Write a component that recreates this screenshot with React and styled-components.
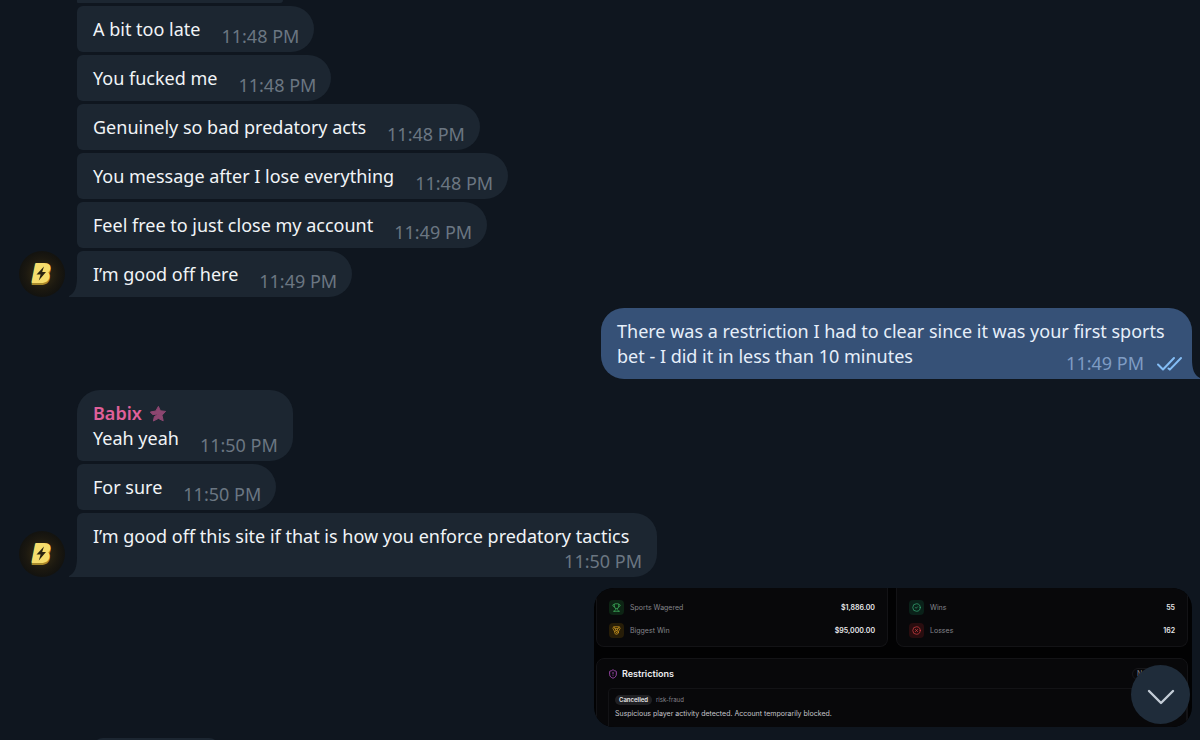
import React from "react";
import styled, { createGlobalStyle } from "styled-components";
import { Trophy, Medal, CircleCheck, CircleX, ShieldAlert } from "lucide-react";

const firstGroup = [
  { text: "A bit too late", time: "11:48 PM" },
  { text: "You fucked me", time: "11:48 PM" },
  { text: "Genuinely so bad predatory acts", time: "11:48 PM" },
  { text: "You message after I lose everything", time: "11:48 PM" },
  { text: "Feel free to just close my account", time: "11:49 PM" },
  { text: "I’m good off here", time: "11:49 PM", last: true },
];

const secondGroup = [
  { text: "Yeah yeah", time: "11:50 PM", author: "Babix" },
  { text: "For sure", time: "11:50 PM" },
  {
    text: "I’m good off this site if that is how you enforce predatory tactics",
    time: "11:50 PM",
    stacked: true,
    last: true,
  },
];

const Star = () => (
  <svg width="18" height="18" viewBox="0 0 18 18" aria-hidden="true">
    <path
      d="M9.4 1.4 L11.4 5.8 L16.6 6.4 L13 10.2 L14.2 15.8 L9.4 13.4 L4.4 16 L5.4 11.6 L9.4 9 L3.6 9.6 L1.4 7 L6.8 6 Z"
      fill="#8c4670"
      stroke="#8c4670"
      strokeWidth="1"
      strokeLinejoin="round"
    />
  </svg>
);

const Avatar = () => (
  <AvatarCircle>
    <svg width="46" height="46" viewBox="0 0 46 46" role="img" aria-label="Babix">
      <g strokeWidth="2" strokeLinejoin="round">
        <text x="13" y="33" fill="#a88a2c" stroke="#a88a2c">B</text>
        <text x="13" y="31" fill="#f6dd6c" stroke="#f6dd6c">B</text>
      </g>
      <path d="M18 17 H28 V29 H17 Z" fill="#f6dd6c" />
      <path d="M25 15.5 L17.5 23.4 H21.6 L19.8 29.5 L27 21 H23.2 Z" fill="#2b2411" />
    </svg>
  </AvatarCircle>
);

const Message = ({ text, time, author, stacked, last }) => (
  <Bubble $last={last} $author={author}>
    {author && (
      <Author>
        {author}
        <Star />
      </Author>
    )}
    {text}
    <Time $stacked={stacked}>{time}</Time>
    {last && (
      <Tail width="9" height="20" viewBox="0 0 9 20" aria-hidden="true">
        <path d="M9 0 H8 C8 10 6 16 0 19 V20 H9 Z" fill="#1c2631" />
      </Tail>
    )}
  </Bubble>
);

export default function App() {
  return (
    <>
      <GlobalStyle />
      <Chat>
        <CutBubble />
        <Group>
          <Avatar />
          <Messages>
            {firstGroup.map((message) => (
              <Message key={message.text} {...message} />
            ))}
          </Messages>
        </Group>

        <OwnBubble>
          There was a restriction I had to clear since it was your first sports bet - I did it in less
          than 10 minutes
          <Time $own>
            11:49 PM
            <svg width="25" height="16" viewBox="0 0 25 16" aria-label="Read">
              <path
                d="M1 8.5 L6 13.5 L17 2 M11.5 12.5 L12.8 13.6 L24 2"
                fill="none"
                stroke="#84bdf5"
                strokeWidth="2"
                strokeLinecap="round"
                strokeLinejoin="round"
              />
            </svg>
          </Time>
          <OwnTail width="9" height="20" viewBox="0 0 9 20" aria-hidden="true">
            <path d="M0 0 H1 C1 10 3 16 9 19 V20 H0 Z" fill="#365177" />
          </OwnTail>
        </OwnBubble>

        <Group>
          <Avatar />
          <Messages>
            {secondGroup.map((message) => (
              <Message key={message.text} {...message} />
            ))}
          </Messages>
        </Group>

        <Attachment>
          <Stats>
            <Card>
              <Stat>
                <StatIcon $color="#3fae5c" $tint="#0d2414"><Trophy size={9} /></StatIcon>
                Sports Wagered
                <Value>$1,886.00</Value>
              </Stat>
              <Stat>
                <StatIcon $color="#d09a20" $tint="#271d08"><Medal size={9} /></StatIcon>
                Biggest Win
                <Value>$95,000.00</Value>
              </Stat>
            </Card>
            <Card>
              <Stat>
                <StatIcon $color="#35a573" $tint="#0a2119"><CircleCheck size={9} /></StatIcon>
                Wins
                <Value>55</Value>
              </Stat>
              <Stat>
                <StatIcon $color="#cc3d40" $tint="#290d0f"><CircleX size={9} /></StatIcon>
                Losses
                <Value>162</Value>
              </Stat>
            </Card>
          </Stats>
          <Restrictions>
            <RestrictionsHead>
              <ShieldAlert size={10} color="#b552c4" />
              <h2>Restrictions</h2>
              <Pill>New</Pill>
            </RestrictionsHead>
            <Restriction>
              <Tags>
                <Cancelled>Cancelled</Cancelled>
                risk-fraud
              </Tags>
              <p>Suspicious player activity detected. Account temporarily blocked.</p>
            </Restriction>
          </Restrictions>
        </Attachment>

        <NextBubble />

        <ScrollDown type="button" aria-label="Scroll to bottom">
          <svg width="28" height="16" viewBox="0 0 28 16" aria-hidden="true">
            <path
              d="M2 2 L14 14 L26 2"
              fill="none"
              stroke="#c3ccd6"
              strokeWidth="2.4"
              strokeLinecap="round"
              strokeLinejoin="round"
            />
          </svg>
        </ScrollDown>
      </Chat>
    </>
  );
}

const GlobalStyle = createGlobalStyle`
  * {
    box-sizing: border-box;
  }
  body {
    margin: 0;
    background: #0f161f;
  }
  h2, p {
    margin: 0;
  }
`;

const Chat = styled.main`
  position: relative;
  display: flex;
  flex-direction: column;
  gap: 11px;
  height: 100vh;
  overflow: hidden;
  padding-right: 8px;
  color: #f1f4f7;
  font: 18px/25px "Noto Sans", sans-serif;
`;

const CutBubble = styled.div`
  flex: none;
  width: 206px;
  height: 3px;
  margin: 0 0 -8px 77px;
  background: #1c2631;
  border-radius: 0 0 20px 6px;
`;

const NextBubble = styled.div`
  flex: none;
  width: 126px;
  height: 20px;
  margin-left: 93px;
  background: #1c2631;
  border-radius: 10px;
`;

const Group = styled.section`
  display: flex;
  flex: none;
  align-items: flex-end;
  gap: 12px;
  padding-left: 19px;
`;

const AvatarCircle = styled.div`
  flex: none;
  width: 46px;
  height: 46px;
  border-radius: 50%;
  background: radial-gradient(circle, #3a3014 0%, #1b1810 50%, #12120f 72%);

  text {
    font: italic bold 25px "DejaVu Sans", sans-serif;
  }
`;

const Messages = styled.div`
  display: flex;
  flex-direction: column;
  align-items: flex-start;
  gap: 3px;
`;

const Bubble = styled.div`
  position: relative;
  display: flow-root;
  max-width: 580px;
  padding: 11px 15px 10px 16px;
  background: #1c2631;
  border-radius: ${(props) => (props.$author ? "23px 23px 23px 6px" : "6px 23px 23px 6px")};
  ${(props) => props.$last && "border-bottom-left-radius: 0;"}
`;

const OwnBubble = styled(Bubble)`
  flex: none;
  align-self: flex-end;
  max-width: 591px;
  padding-right: 10px;
  background: #365177;
  color: #e6effa;
  border-radius: 23px 23px 0 23px;
`;

const Tail = styled.svg`
  position: absolute;
  left: -8px;
  bottom: 0;
`;

const OwnTail = styled.svg`
  position: absolute;
  right: -8px;
  bottom: 0;
`;

const Author = styled.div`
  display: flex;
  align-items: center;
  gap: 7px;
  color: #e0609a;
  font-weight: 600;
`;

const Time = styled.span`
  float: right;
  display: flex;
  align-items: center;
  gap: 13px;
  margin: ${(props) => (props.$stacked ? "0" : "7px")} 0 -7px 21px;
  color: ${(props) => (props.$own ? "#7f9cc4" : "#6b7682")};
`;

const Attachment = styled.section`
  flex: none;
  align-self: flex-end;
  width: 598px;
  height: 139px;
  overflow: hidden;
  padding: 0 4px 0 2px;
  background: #020203;
  border-radius: 20px;
  color: #85858a;
  font: 7px/12px Inter, sans-serif;
`;

const Stats = styled.div`
  display: grid;
  grid-template-columns: 1fr 1fr;
  gap: 8px;
`;

const Card = styled.div`
  display: flex;
  flex-direction: column;
  gap: 8px;
  padding: 12px 12px 8px;
  background: #08080a;
  border: 1px solid #131316;
  border-top: 0;
  border-radius: 0 0 8px 8px;
`;

const Stat = styled.div`
  display: flex;
  align-items: center;
  gap: 6px;
`;

const StatIcon = styled.span`
  display: grid;
  place-items: center;
  width: 15px;
  height: 15px;
  border-radius: 4px;
  color: ${(props) => props.$color};
  background: ${(props) => props.$tint};
`;

const Value = styled.strong`
  margin-left: auto;
  color: #e8e8ea;
  font-weight: 600;
`;

const Restrictions = styled.div`
  margin-top: 11px;
  padding: 9px 0 0 11px;
  background: #08080a;
  border: 1px solid #131316;
  border-radius: 8px 8px 0 0;
`;

const RestrictionsHead = styled.div`
  display: flex;
  align-items: center;
  gap: 4px;
  height: 12px;

  h2 {
    color: #ededf0;
    font-size: 9px;
    font-weight: 600;
  }
`;

const Pill = styled.span`
  margin: 0 30px 0 auto;
  padding: 0 4px;
  border: 1px solid #17171a;
  border-radius: 6px;
  line-height: 10px;
`;

const Restriction = styled.div`
  margin-top: 8px;
  padding: 6px;
  height: 50px;
  border: 1px solid #131316;
  border-radius: 4px 0 0 0;

  p {
    margin-top: 3px;
    color: #c6c6ca;
  }
`;

const Tags = styled.div`
  display: flex;
  align-items: center;
  gap: 4px;
  font-size: 6px;
  line-height: 10px;
`;

const Cancelled = styled.span`
  padding: 0 4px;
  background: #202023;
  border-radius: 5px;
  color: #e8e8ea;
  font-weight: 600;
`;

const ScrollDown = styled.button`
  position: absolute;
  right: 10px;
  bottom: 16px;
  display: grid;
  place-items: center;
  width: 59px;
  height: 59px;
  padding: 4px 0 0;
  border: 0;
  border-radius: 50%;
  background: #1f2c3a;
  cursor: pointer;
`;
